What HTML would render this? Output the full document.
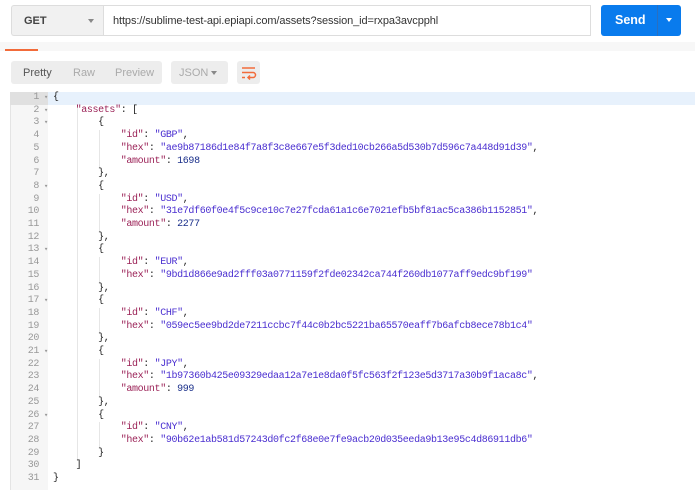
<!DOCTYPE html>
<html><head><meta charset="utf-8"><style>
*{margin:0;padding:0;box-sizing:border-box}
body{width:695px;height:494px;background:#fff;position:relative;overflow:hidden;font-family:"Liberation Sans",sans-serif}
.abs{position:absolute}
.get{left:11px;top:5px;width:93px;height:31px;background:#f1f1f1;border:1px solid #ddd;border-right:none;border-radius:3px 0 0 3px;font-size:11px;font-weight:bold;color:#444;padding:9px 0 0 12px}
.get .ar{position:absolute;left:76px;top:13px;width:0;height:0;border-left:3px solid transparent;border-right:3px solid transparent;border-top:4px solid #888}
.url{left:103px;top:5px;width:488px;height:31px;border:1px solid #ddd;background:#fff;font-size:11px;color:#333;padding:9px 0 0 9px;white-space:nowrap;letter-spacing:-0.1px}
.send{left:601px;top:5px;width:80px;height:31px;background:#097bed;border-radius:3px;color:#fff;font-size:12.5px;font-weight:bold}
.band{left:0;top:42px;width:695px;height:9px;background:#f7f7f7}
.tab{left:5px;top:49px;width:33px;height:2px;background:#f26b3a}
.btns{left:11px;top:61px;width:151px;height:23px;background:#ededed;border-radius:3px;font-size:11px}
.btns span{position:absolute;top:6px}
.json{left:171px;top:61px;width:57px;height:23px;background:#ededed;border-radius:3px;font-size:11px;color:#aaa;padding:6px 0 0 8px}
.wrap{left:237px;top:61px;width:23px;height:23px;background:#ededed;border-radius:3px}
.gutter{left:10px;top:92px;width:38px;height:398px;background:#f6f6f6;border-left:1px solid #e4e4e4}
.hl{left:48px;top:92px;width:647px;height:13px;background:#e7f1fc}
.hlg{left:10px;top:92px;width:38px;height:13px;background:#e0e0e0}
pre{position:absolute;top:92px;font-family:"Liberation Mono",monospace;font-size:10px;letter-spacing:-0.36px;line-height:12.7px}
.nums{left:8px;width:31px;text-align:right;color:#999}
.fold{left:44px;color:#999;font-size:7px}
.code{left:53px;color:#222}
.k{color:#9b2257}.s{color:#4a2fd0}.n{color:#1a2f8a}
.guide{width:1px;background:#e6e6e6;position:absolute}
</style></head><body>
<div class="abs get">GET<div class="ar"></div></div>
<div class="abs url">https://sublime-test-api.epiapi.com/assets?session_id=rxpa3avcpphl</div>
<div class="abs send"><span style="position:absolute;left:14px;top:8px">Send</span><div style="position:absolute;left:56px;top:0;width:1px;height:31px;background:#2a6fc0"></div><div style="position:absolute;left:65px;top:13px;border-left:3px solid transparent;border-right:3px solid transparent;border-top:4px solid #fff"></div></div>
<div class="abs band"></div><div class="abs tab"></div>
<div class="abs btns"><span style="left:12px;color:#555">Pretty</span><span style="left:62px;color:#aaa">Raw</span><span style="left:104px;color:#aaa">Preview</span></div>
<div class="abs json">JSON<div style="position:absolute;left:40px;top:10px;border-left:3px solid transparent;border-right:3px solid transparent;border-top:4px solid #888"></div></div>
<div class="abs wrap"><svg width="23" height="23" viewBox="0 0 23 23" fill="none" stroke="#f26b3a" stroke-width="1.5"><path d="M5 7h13"/><path d="M5 11.5h11a2.5 2.5 0 0 1 0 5h-5"/><path d="M13 14.5l-2 2 2 2"/><path d="M5 16.5h3"/></svg></div>
<div class="abs gutter"></div><div class="abs hlg"></div><div class="abs hl"></div>
<div class="guide" style="left:77px;top:105px;height:356px"></div>
<div class="guide" style="left:99px;top:130px;height:38px"></div>
<div class="guide" style="left:99px;top:194px;height:38px"></div>
<div class="guide" style="left:99px;top:257px;height:26px"></div>
<div class="guide" style="left:99px;top:308px;height:26px"></div>
<div class="guide" style="left:99px;top:359px;height:38px"></div>
<div class="guide" style="left:99px;top:422px;height:26px"></div>
<pre class="nums">1
2
3
4
5
6
7
8
9
10
11
12
13
14
15
16
17
18
19
20
21
22
23
24
25
26
27
28
29
30
31</pre>
<pre class="fold" style="line-height:12.7px;font-size:7px">▾
▾
▾




▾




▾



▾



▾




▾</pre>
<pre class="code">{
    <span class="k">"assets"</span>: [
        {
            <span class="k">"id"</span>: <span class="s">"GBP"</span>,
            <span class="k">"hex"</span>: <span class="s">"ae9b87186d1e84f7a8f3c8e667e5f3ded10cb266a5d530b7d596c7a448d91d39"</span>,
            <span class="k">"amount"</span>: <span class="n">1698</span>
        },
        {
            <span class="k">"id"</span>: <span class="s">"USD"</span>,
            <span class="k">"hex"</span>: <span class="s">"31e7df60f0e4f5c9ce10c7e27fcda61a1c6e7021efb5bf81ac5ca386b1152851"</span>,
            <span class="k">"amount"</span>: <span class="n">2277</span>
        },
        {
            <span class="k">"id"</span>: <span class="s">"EUR"</span>,
            <span class="k">"hex"</span>: <span class="s">"9bd1d866e9ad2fff03a0771159f2fde02342ca744f260db1077aff9edc9bf199"</span>
        },
        {
            <span class="k">"id"</span>: <span class="s">"CHF"</span>,
            <span class="k">"hex"</span>: <span class="s">"059ec5ee9bd2de7211ccbc7f44c0b2bc5221ba65570eaff7b6afcb8ece78b1c4"</span>
        },
        {
            <span class="k">"id"</span>: <span class="s">"JPY"</span>,
            <span class="k">"hex"</span>: <span class="s">"1b97360b425e09329edaa12a7e1e8da0f5fc563f2f123e5d3717a30b9f1aca8c"</span>,
            <span class="k">"amount"</span>: <span class="n">999</span>
        },
        {
            <span class="k">"id"</span>: <span class="s">"CNY"</span>,
            <span class="k">"hex"</span>: <span class="s">"90b62e1ab581d57243d0fc2f68e0e7fe9acb20d035eeda9b13e95c4d86911db6"</span>
        }
    ]
}</pre>
</body></html>
